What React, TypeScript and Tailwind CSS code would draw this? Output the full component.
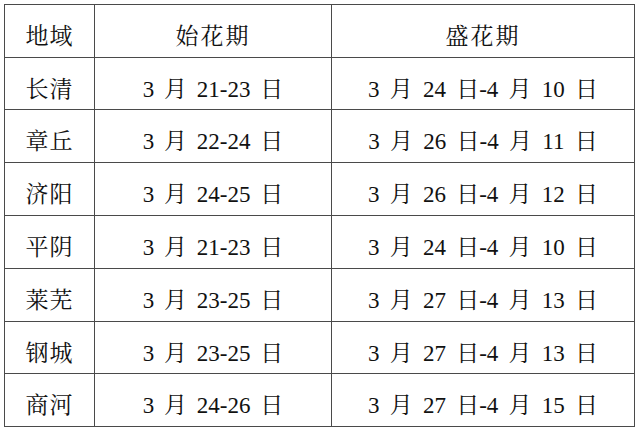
import React from 'react';

interface Row {
  region: string;
  start: string;
  bloom: string;
}

const rows: Row[] = [
  { region: '长清', start: '3 月 21-23 日', bloom: '3 月 24 日-4 月 10 日' },
  { region: '章丘', start: '3 月 22-24 日', bloom: '3 月 26 日-4 月 11 日' },
  { region: '济阳', start: '3 月 24-25 日', bloom: '3 月 26 日-4 月 12 日' },
  { region: '平阴', start: '3 月 21-23 日', bloom: '3 月 24 日-4 月 10 日' },
  { region: '莱芜', start: '3 月 23-25 日', bloom: '3 月 27 日-4 月 13 日' },
  { region: '钢城', start: '3 月 23-25 日', bloom: '3 月 27 日-4 月 13 日' },
  { region: '商河', start: '3 月 24-26 日', bloom: '3 月 27 日-4 月 15 日' },
];

const cell = 'bg-white flex items-center justify-center pt-[11px] text-[23px] leading-none text-[#111] whitespace-pre';

const App: React.FC = () => {
  return (
    <div
      className="w-[640px] h-[431px] bg-white pt-[4px] pl-[4px]"
      style={{ fontFamily: '"Liberation Serif", "Noto Serif CJK SC", "Noto Sans CJK SC", serif' }}
    >
      <div className="w-[631px] bg-[#4a4a4a] p-px grid gap-px grid-cols-[89px_236px_302px] grid-rows-[52px_51px_52px_52px_52px_52px_51px_52px]">
        {/* header */}
        <div className={`${cell} tracking-[1px]`}>地域</div>
        <div className={`${cell} tracking-[2px]`}>始花期</div>
        <div className={`${cell} tracking-[2px]`}>盛花期</div>

        {rows.map((r) => (
          <React.Fragment key={r.region}>
            <div className={`${cell} tracking-[1px]`}>{r.region}</div>
            <div className={`${cell} [word-spacing:4px]`}>{r.start}</div>
            <div className={`${cell} [word-spacing:4.5px]`}>{r.bloom}</div>
          </React.Fragment>
        ))}
      </div>
    </div>
  );
};

export default App;
